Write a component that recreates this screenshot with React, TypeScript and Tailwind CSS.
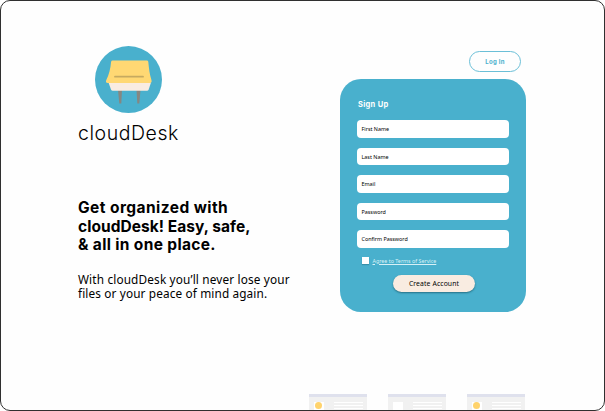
import React from "react";

const fields = ["First Name", "Last Name", "Email", "Password", "Confirm Password"];

function Logo() {
  return (
    <svg className="ml-[17px] block h-[68px] w-[67px]" viewBox="0 0 67 68">
      <circle cx="33.5" cy="33.6" r="33.5" fill="#49b0cd" />
      <path d="M23 44h4l-.7 13.500h-2zM41.500 44h4l-1.200 13.500h-2z" fill="#858782" />
      <path d="M13.500 36.500h42.500l-2.400 7.200q-.4 1-1.600 1H17.700q-1.200 0-1.600-1z" fill="#f9ece1" />
      <path d="M17.600 14.500h34.200q1.200 0 1.500 1.200c.7 7 1.300 12.500 3.200 18.600.4 1.700-.2 2.700-1.500 2.700H12.700c-1.600 0-2.100-1-1.500-2.700 2.800-5.500 4.300-11.600 4.900-18.600q.3-1.200 1.500-1.200z" fill="#ffd873" />
      <path d="M20 30.700h28" stroke="#c6aa60" strokeWidth="1.800" strokeLinecap="round" />
    </svg>
  );
}

function Preview({ dot }: { dot: boolean }) {
  return (
    <div className="h-[17px] w-[58px] shrink-0 border-t-[3px] border-[#dfe1ed] bg-[#f1f1f1] pl-[5px] pt-[5px]">
      <div className="flex">
        <div className="flex h-[10px] w-[10px] items-start justify-center bg-white">
          {dot && <div className="h-[7px] w-[7px] rounded-full bg-[#ffd36c]" />}
        </div>
        <div className="ml-[10px] flex w-[29px] flex-col gap-[2px]">
          <div className="h-px bg-white" />
          <div className="h-px bg-white" />
          <div className="h-px bg-white" />
        </div>
      </div>
    </div>
  );
}

export default function App() {
  return (
    <div className="h-[411px] w-[605px] overflow-hidden rounded-[10px] border border-[#303030] bg-[#fefefe] font-['Noto_Sans',sans-serif] text-black">
      <div className="flex h-[393px] pl-[77px]">
        <section className="w-[262px] shrink-0 pt-[45px]">
          <Logo />
          <div className="mt-[6px] h-[26px] whitespace-nowrap font-[Inter,sans-serif] text-[19.500px] font-light leading-[26px] tracking-[0.55px]">cloudDesk</div>
          <h1 className="mt-[53px] whitespace-nowrap font-[Inter,sans-serif] text-[15.500px] font-bold leading-[18.500px]">
            <span className="block tracking-[0.44px]">Get organized with</span>
            <span className="block tracking-[0.05px]">cloudDesk! Easy, safe,</span>
            <span className="block tracking-[0.35px]">&amp; all in one place.</span>
          </h1>
          <p className="mt-[17px] whitespace-nowrap text-[11.800px] leading-[14.500px]">
            <span className="block tracking-[0.15px]">With cloudDesk you’ll never lose your</span>
            <span className="block tracking-[0.13px]">files or your peace of mind again.</span>
          </p>
        </section>
        <section className="flex w-[186px] shrink-0 flex-col pt-[50px]">
          <button className="mr-[5px] h-[21px] w-[52px] self-end rounded-full border border-[#6bbfd7] font-[Inter,sans-serif] text-[6px] font-bold leading-[18px] tracking-[0.3px] text-[#49b0cd]">Log In</button>
          <form className="mt-[6.500px] h-[233.500px] rounded-[21px] bg-[#49b0cd] px-[17px] pt-[20px]">
            <h2 className="ml-px h-[12px] font-[Inter,sans-serif] text-[7.500px] font-bold leading-[12px] tracking-[0.3px] text-white">Sign Up</h2>
            <div className="mt-[9.800px] flex flex-col gap-[10.200px]">
              {fields.map((name) => (
                <div key={name} className="h-[17.300px] w-[152px] rounded-[4px] bg-white pl-[4.500px] text-[5.400px] leading-[18.500px]">{name}</div>
              ))}
            </div>
            <div className="mt-[9px] flex h-[8px] items-center pl-[5px]">
              <span className="h-[7px] w-[7px] bg-white shadow-[0_1px_1px_#3790aa]" />
              <a className="ml-[3.500px] whitespace-nowrap text-[5.350px] leading-[8px] text-[#d8f0f6] underline underline-offset-1">Agree to Terms of Service</a>
            </div>
            <button type="button" className="ml-[36px] mt-[10px] block h-[17.500px] w-[82px] whitespace-nowrap rounded-full bg-[#f9ece1] text-[6.800px] leading-[17.500px] tracking-[0.12px] shadow-[0_1px_2px_#267085]">Create Account</button>
          </form>
        </section>
      </div>
      <div className="flex gap-[21px] pl-[307.500px]">
        <Preview dot />
        <Preview dot={false} />
        <Preview dot />
      </div>
    </div>
  );
}
